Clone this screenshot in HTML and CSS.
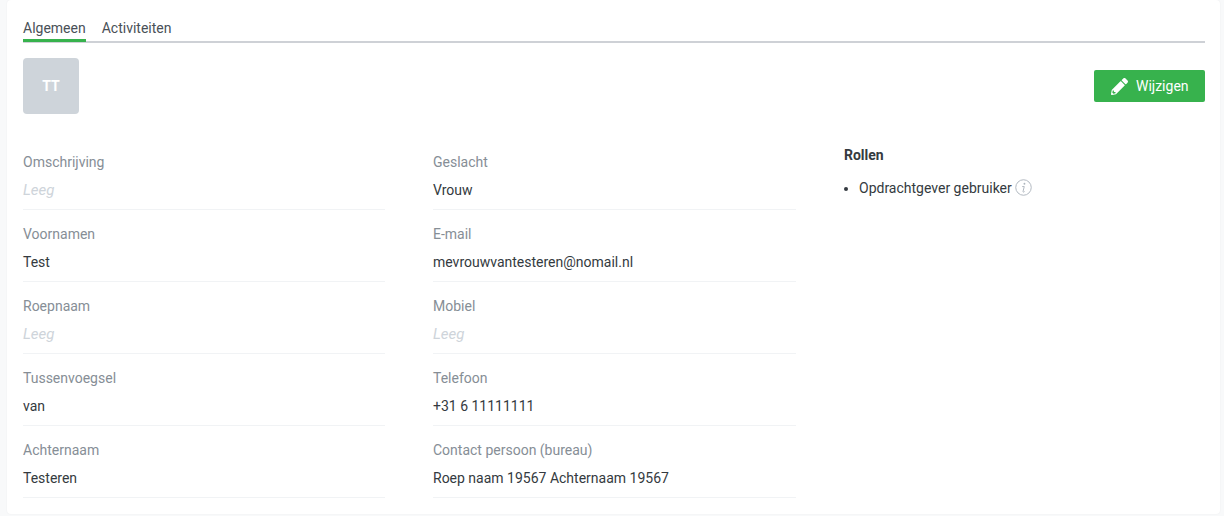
FILE: index.html
```html
<!DOCTYPE html>
<html lang="nl">

<head>
  <meta charset="UTF-8">
  <meta name="viewport" content="width=device-width, initial-scale=1.0">
  <title>Gebruiker</title>
  <link rel="stylesheet" href="styles.css">
</head>

<body>
  <div class="card">
    <div class="tabs">
      <a class="tab active">Algemeen</a>
      <a class="tab">Activiteiten</a>
    </div>
    <div class="head-row">
      <div class="avatar">TT</div>
      <button type="button" class="edit-button">
        <svg class="pencil" viewBox="0 0 512 512" aria-hidden="true">
          <path fill="currentColor" d="M497.9 142.1l-46.1 46.1c-4.7 4.7-12.3 4.7-17 0l-111-111c-4.7-4.7-4.7-12.3 0-17l46.1-46.1c18.7-18.7 49.1-18.7 67.9 0l60.1 60.1c18.8 18.7 18.8 49.1 0 67.9zM284.2 99.8L21.6 362.4.4 483.9c-2.9 16.4 11.4 30.6 27.8 27.8l121.5-21.3 262.6-262.6c4.7-4.7 4.7-12.3 0-17l-111-111c-4.8-4.7-12.4-4.7-17.1 0zM88 424h48v36.3l-64.5 11.3-31.1-31.1L51.7 376H88v48z"/>
        </svg>
        Wijzigen
      </button>
    </div>
    <div class="columns">
      <div class="column">
        <div class="field"><div class="field-label">Omschrijving</div><div class="field-value empty">Leeg</div></div>
        <div class="field"><div class="field-label">Voornamen</div><div class="field-value">Test</div></div>
        <div class="field"><div class="field-label">Roepnaam</div><div class="field-value empty">Leeg</div></div>
        <div class="field"><div class="field-label">Tussenvoegsel</div><div class="field-value">van</div></div>
        <div class="field"><div class="field-label">Achternaam</div><div class="field-value">Testeren</div></div>
      </div>
      <div class="column">
        <div class="field"><div class="field-label">Geslacht</div><div class="field-value">Vrouw</div></div>
        <div class="field"><div class="field-label">E-mail</div><div class="field-value">mevrouwvantesteren@nomail.nl</div></div>
        <div class="field"><div class="field-label">Mobiel</div><div class="field-value empty">Leeg</div></div>
        <div class="field"><div class="field-label">Telefoon</div><div class="field-value">+31 6 11111111</div></div>
        <div class="field"><div class="field-label">Contact persoon (bureau)</div><div class="field-value">Roep naam 19567 Achternaam 19567</div></div>
      </div>
      <div class="column">
        <h2 class="roles-title">Rollen</h2>
        <ul class="roles">
          <li>Opdrachtgever gebruiker
            <svg class="info" viewBox="0 0 18 18" aria-hidden="true">
              <circle cx="9" cy="9" r="8.2" fill="none" stroke="currentColor" stroke-width="1"/>
              <circle cx="10" cy="5" r="1" fill="currentColor"/>
              <path d="M7.6 8h2.2l-1.3 5.2c-.1.5.1.7.5.7.4 0 .8-.3 1.2-.7" fill="none" stroke="currentColor" stroke-width="1"/>
            </svg>
          </li>
        </ul>
      </div>
    </div>
  </div>
</body>

</html>
```

FILE: styles.css
```css
html,
body {
  height: 100%;
}

body {
  margin: 0;
  background-color: #f8f9fa;
  font-family: Roboto, "Liberation Sans", sans-serif;
  font-size: 14px;
  color: #343a40;
  overflow: hidden;
}

.card {
  box-sizing: border-box;
  width: 1213px;
  height: 514px;
  margin-left: 7px;
  padding: 16px 15px 0 16px;
  background-color: #fff;
  border-radius: 4px;
  box-shadow: 0 0 2px rgba(0, 0, 0, 0.06);
}

.tabs {
  display: flex;
  gap: 16px;
  height: 25px;
  border-bottom: 2px solid #ced1d6;
}

.tab {
  box-sizing: border-box;
  height: 26px;
  line-height: 24px;
  color: #495057;
}

.tab.active {
  border-bottom: 3px solid #37b24d;
}

.head-row {
  display: flex;
  justify-content: space-between;
  align-items: center;
  margin-top: 15px;
}

.avatar {
  display: flex;
  justify-content: center;
  align-items: center;
  width: 56px;
  height: 56px;
  background-color: #ced4da;
  border-radius: 4px;
  color: #fff;
  font-weight: 700;
}

.edit-button {
  display: flex;
  align-items: center;
  gap: 8px;
  height: 32px;
  width: 111px;
  padding: 0 0 0 17px;
  background-color: #37b24d;
  border: none;
  border-radius: 2px;
  color: #fff;
  font-family: inherit;
  font-size: 14px;
  cursor: pointer;
}

.pencil {
  width: 17px;
  height: 17px;
}

.columns {
  display: grid;
  grid-template-columns: 362px 363px 1fr;
  column-gap: 48px;
  margin-top: 34px;
}

.field {
  height: 61px;
  margin-bottom: 10px;
  border-bottom: 1px solid #f1f3f5;
}

.field-label {
  height: 28px;
  line-height: 28px;
  color: #868e96;
}

.field-value {
  height: 28px;
  line-height: 28px;
}

.field-value.empty {
  color: #ced4da;
  font-size: 15px;
  font-style: italic;
}

.roles-title {
  margin: 0;
  font-size: 14px;
  font-weight: 700;
  line-height: 14px;
}

.roles {
  margin: 16px 0 0;
  padding-left: 15px;
  line-height: 21px;
}

.info {
  width: 17px;
  height: 17px;
  margin-bottom: -3px;
  color: #adb5bd;
}
```
